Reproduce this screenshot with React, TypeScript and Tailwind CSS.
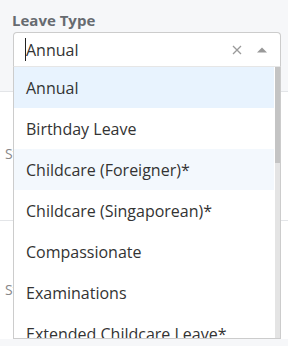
import React from "react";

const items = [
  "Annual",
  "Birthday Leave",
  "Childcare (Foreigner)*",
  "Childcare (Singaporean)*",
  "Compassionate",
  "Examinations",
  "Extended Childcare Leave*",
  "Hospitalisation",
];

export default function App() {
  return (
    <div
      className="relative w-[288px] h-[346px] overflow-hidden bg-[#f6f7f9]"
      style={{ fontFamily: '"Open Sans", "Noto Sans", sans-serif' }}
    >
      {/* header area */}
      <div className="h-[91px] px-[12px] pt-[10px]">
        <div className="text-[15px] leading-[20px] font-bold text-[#676b70]">Leave Type</div>
        <div className="mt-[2px] ml-[1px] w-[268px] h-[35px] bg-white border border-[#cccccc] border-b-[#e6e6e6] rounded-t-[4px] flex items-center pl-[11px] pr-[12px]">
          <div className="w-[1px] h-[23px] bg-[#222]" />
          <span className="text-[16px] text-[#333] leading-[20px] flex-1">Annual</span>
          <svg width="10" height="10" viewBox="0 0 10 10" className="mr-[15px]">
            <path d="M1 1 L9 9 M9 1 L1 9" stroke="#9a9a9a" strokeWidth="1.3" />
          </svg>
          <svg width="10" height="6" viewBox="0 0 10 6" className="mr-[1px]">
            <polygon points="0,5.5 5,0.5 10,5.5" fill="#999" />
          </svg>
        </div>
      </div>
      {/* white content behind */}
      <div className="h-[248px] bg-white border-t border-[#e3e5e8] flex flex-col">
        <div className="h-[129px] border-b border-[#e3e5e8] pl-[5px] pt-[52px] text-[14px] text-[#888] leading-[20px]">
          Start Date
        </div>
        <div className="flex-1 pl-[5px] pt-[59px] text-[14px] text-[#888] leading-[20px]">Status</div>
      </div>
      {/* dropdown menu */}
      <div className="absolute left-[13px] top-[67px] w-[268px] h-[272px] bg-white border-x border-b border-[#cccccc] overflow-hidden">
        <div className="pr-[6px]">
          {items.map((it, i) => (
            <div
              key={it}
              className={
                "h-[41px] flex items-center pl-[12px] text-[16px] leading-[20px] text-[#333] " +
                (i === 0 ? "bg-[#e8f3fe]" : i === 2 ? "bg-[#f3f8fd]" : "bg-white")
              }
            >
              {it}
            </div>
          ))}
        </div>
        <div className="absolute right-0 top-0 bottom-0 w-[6px] bg-[#e4e4e4] border-l border-white">
          <div className="h-[96px] bg-[#c4c4c4]" />
        </div>
      </div>
    </div>
  );
}
